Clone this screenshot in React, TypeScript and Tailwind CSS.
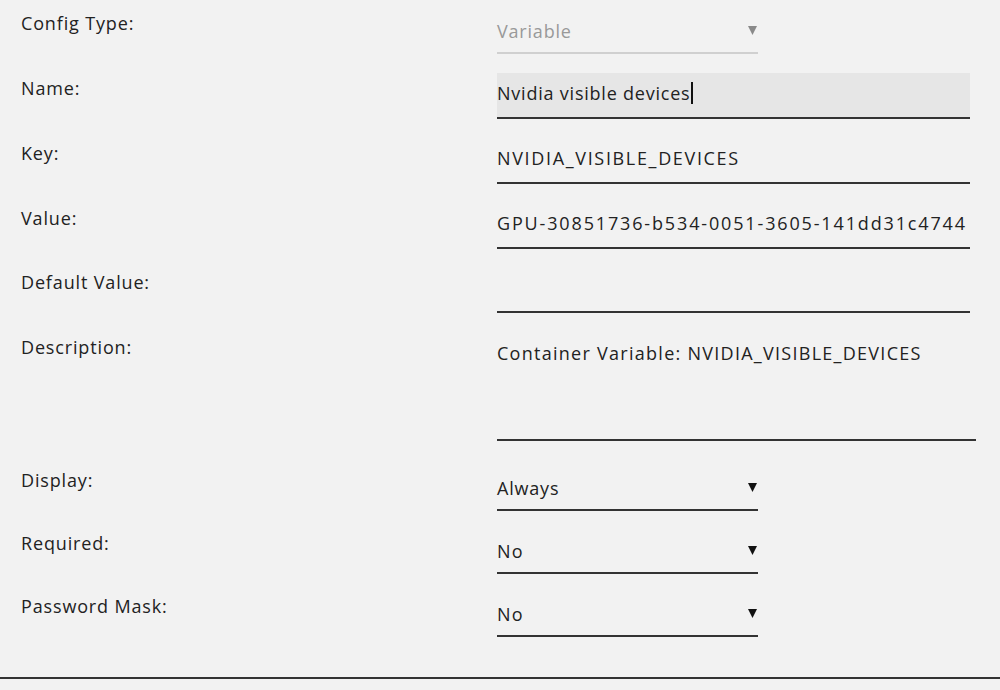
import React from "react";

const font = { fontFamily: '"Open Sans", "Noto Sans", sans-serif' };

function Label({ children }: { children: React.ReactNode }) {
  return (
    <div className="w-[497px] shrink-0 pl-[21px] pt-[3px] text-[18px] leading-[24px] tracking-[0.85px] text-[#222]">
      {children}
    </div>
  );
}

function Caret({ muted = false }: { muted?: boolean }) {
  return (
    <svg width="9" height="9" viewBox="0 0 9 9" className="mr-[1px]">
      <polygon points="0,0 9,0 4.5,9" fill={muted ? "#8a8a8a" : "#111"} />
    </svg>
  );
}

function Select({ value, muted = false, spacing = "tracking-[0.8px]" }: { value: string; muted?: boolean; spacing?: string }) {
  return (
    <div
      className={`flex h-[46px] w-[261px] items-center justify-between border-b-2 ${
        muted ? "border-[#d0d0d0] text-[#999]" : "border-[#333] text-[#222]"
      }`}
    >
      <span className={`pt-[1px] text-[18px] leading-[24px] ${spacing}`}>{value}</span>
      <Caret muted={muted} />
    </div>
  );
}

function Input({ value, active = false, spacing = "" }: { value?: string; active?: boolean; spacing?: string }) {
  return (
    <div
      className={`flex h-[46px] w-[473px] items-center border-b-2 border-[#333] text-[18px] leading-[24px] text-[#222] ${
        active ? "bg-[#e6e6e6]" : ""
      }`}
    >
      <span className={`-mt-[4px] ${spacing}`}>{value}</span>
      {active && <span className="-mt-[4px] ml-[1px] inline-block h-[22px] w-[1.5px] bg-[#111]" />}
    </div>
  );
}

export default function App() {
  return (
    <div className="h-[690px] w-[1000px] overflow-hidden bg-[#f2f2f2]" style={font}>
      <div className="flex flex-col pt-[8px]">
        <div className="flex h-[65px]">
          <Label>Config Type:</Label>
          <Select value="Variable" muted spacing="tracking-[0.8px]" />
        </div>
        <div className="flex h-[65px]">
          <Label>Name:</Label>
          <Input value="Nvidia visible devices" active spacing="tracking-[0.78px]" />
        </div>
        <div className="flex h-[65px]">
          <Label>Key:</Label>
          <Input value="NVIDIA_VISIBLE_DEVICES" spacing="tracking-[1.66px]" />
        </div>
        <div className="flex h-[64px]">
          <Label>Value:</Label>
          <Input value="GPU-30851736-b534-0051-3605-141dd31c4744" spacing="tracking-[1.85px]" />
        </div>
        <div className="flex h-[65px]">
          <Label>Default Value:</Label>
          <Input />
        </div>
        <div className="flex h-[133px]">
          <Label>Description:</Label>
          <div className="h-[109px] w-[479px] border-b-2 border-[#333] pt-[9px] text-[18px] leading-[24px] tracking-[1.27px] text-[#222]">
            Container Variable: NVIDIA_VISIBLE_DEVICES
          </div>
        </div>
        <div className="flex h-[63px]">
          <Label>Display:</Label>
          <Select value="Always" />
        </div>
        <div className="flex h-[63px]">
          <Label>Required:</Label>
          <Select value="No" spacing="tracking-[1.2px]" />
        </div>
        <div className="flex h-[86px]">
          <Label>Password Mask:</Label>
          <Select value="No" spacing="tracking-[1.2px]" />
        </div>
      </div>
      <div className="border-t-2 border-[#333]" />
    </div>
  );
}
